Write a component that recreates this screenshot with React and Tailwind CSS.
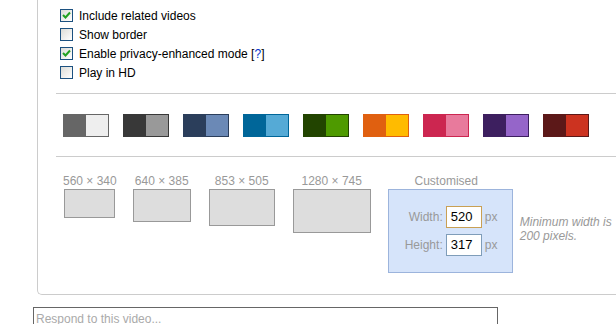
import React from 'react';

const options = [
  { label: 'Include related videos', checked: true },
  { label: 'Show border', checked: false },
  { label: 'Enable privacy-enhanced mode', checked: true, help: true },
  { label: 'Play in HD', checked: false },
];

const swatches = [
  ['#666666', '#eeeeee'],
  ['#383838', '#999999'],
  ['#2b3e5b', '#6b89b6'],
  ['#006699', '#55aad6'],
  ['#224400', '#4e9a00'],
  ['#e06010', '#ffbb00'],
  ['#cc2650', '#e87a9c'],
  ['#3d1f5f', '#9565c9'],
  ['#5c1818', '#cc3320'],
];

const sizes = [
  { label: '560 × 340', w: 51, h: 29, ml: 0 },
  { label: '640 × 385', w: 58, h: 33, ml: 16 },
  { label: '853 × 505', w: 66, h: 37, ml: 18 },
  { label: '1280 × 745', w: 78, h: 44, ml: 18 },
];

function Checkbox({ checked }) {
  return (
    <span className="w-[13px] h-[13px] border border-[#1c5180] bg-gradient-to-br from-[#dcdcd7] to-white flex items-center justify-center shrink-0">
      {checked && (
        <svg width="9" height="9" viewBox="0 0 9 9">
          <path d="M1 4 L3.5 6.5 L8 1.5" stroke="#21a121" strokeWidth="2" fill="none" />
        </svg>
      )}
    </span>
  );
}

export default function App() {
  return (
    <div className="w-[616px] h-[324px] overflow-hidden bg-white text-[12px] leading-[14px]" style={{ fontFamily: '"Liberation Sans", Arial, sans-serif' }}>
      <div className="ml-[37px] w-[620px] border-l border-b border-[#cccccc] rounded-bl-[5px] pl-[18px] pb-[21px]">
        {/* embed options */}
        <div className="pt-[6px] pl-[4px]">
          {options.map((o) => (
            <div key={o.label} className="h-[19px] flex items-center gap-[6px] text-black">
              <Checkbox checked={o.checked} />
              <span>
                {o.label}
                {o.help && (
                  <span> [<span className="text-[#0033cc]">?</span>]</span>
                )}
              </span>
            </div>
          ))}
        </div>

        <div className="mt-[11px] border-t border-[#cccccc]" />

        {/* colour swatches */}
        <div className="flex gap-[14px] pl-[7px] pt-[20px] pb-[19px]">
          {swatches.map(([dark, light]) => (
            <div key={dark} className="w-[46px] h-[23px] border flex justify-end" style={{ backgroundColor: dark, borderColor: dark }}>
              <div className="w-[22px] h-full" style={{ backgroundColor: light }} />
            </div>
          ))}
        </div>

        <div className="border-t border-[#cccccc]" />

        {/* player sizes */}
        <div className="flex items-start pl-[7px] pt-[17px]">
          {sizes.map((s) => (
            <div key={s.label} className="flex flex-col items-center" style={{ marginLeft: s.ml }}>
              <span className="text-[#999999] whitespace-nowrap h-[15px]">{s.label}</span>
              <div className="border border-[#999999] bg-[#dddddd]" style={{ width: s.w, height: s.h }} />
            </div>
          ))}

          <div className="ml-[17px] flex flex-col items-center">
            <span className="text-[#999999] h-[15px] mr-[8px]">Customised</span>
            <div className="w-[125px] h-[84px] border border-[#9cb4dc] bg-[#d6e4fa] flex flex-col justify-center gap-[6px]">
              <div className="flex items-center">
                <span className="w-[54px] text-right text-[#999999]">Width:</span>
                <span className="ml-[3px] w-[36px] h-[22px] border border-[#c9a054] bg-white px-[4px] flex items-center text-[13px] text-black">520</span>
                <span className="ml-[3px] text-[#999999]">px</span>
              </div>
              <div className="flex items-center">
                <span className="w-[54px] text-right text-[#999999]">Height:</span>
                <span className="ml-[3px] w-[36px] h-[22px] border border-[#7f9db9] bg-white px-[4px] flex items-center text-[13px] text-black">317</span>
                <span className="ml-[3px] text-[#999999]">px</span>
              </div>
            </div>
          </div>

          <p className="ml-[7px] mt-[41px] w-[110px] italic text-[#999999]">Minimum width is 200 pixels.</p>
        </div>
      </div>

      <div className="ml-[33px] mt-[12px] w-[465px]">
        <textarea
          className="block w-full h-[60px] border border-[#666666] px-[2px] pt-[4px] text-[12px] leading-[14px] resize-none outline-none placeholder:text-[#aaaaaa]"
          placeholder="Respond to this video..."
          style={{ fontFamily: '"Liberation Sans", Arial, sans-serif' }}
        />
      </div>
    </div>
  );
}
